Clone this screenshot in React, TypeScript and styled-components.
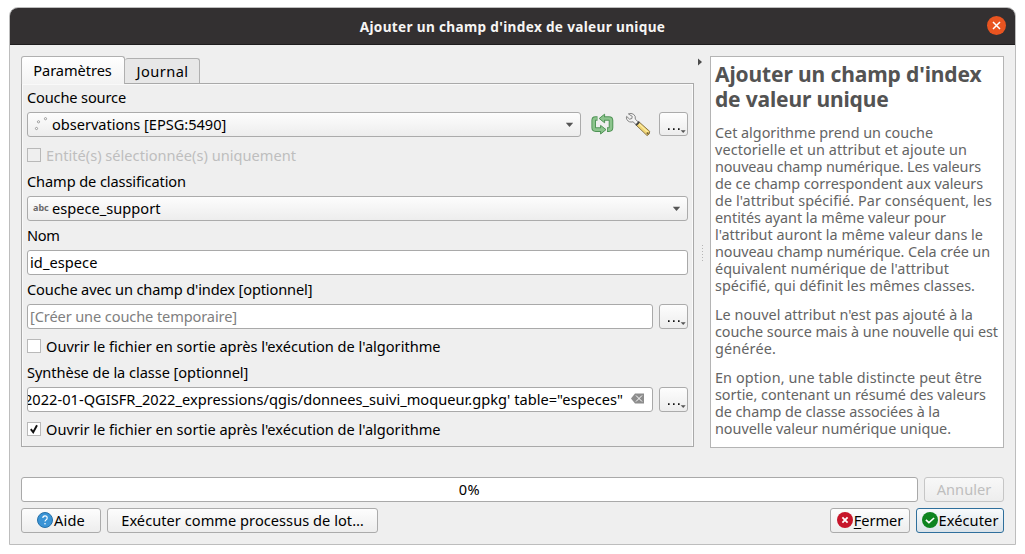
import React, { useLayoutEffect, useRef, useState } from "react";
import styled, { createGlobalStyle, css } from "styled-components";

const Global = createGlobalStyle`
  * { box-sizing: border-box; }
  body { margin: 0; background: #fff; overflow: hidden; }
  #root { font-family: "Noto Sans", "Open Sans", sans-serif; font-size: 14.6px; color: #000; }
  h1, p { margin: 0; }
`;

const TextRun = styled.span`
  display: inline-block;
  white-space: pre;
  flex: none;
`;

/* Controls whose caption sits one pixel above the middle. */
const raisedText = css`
  ${TextRun} {
    margin-bottom: 2px;
  }
`;

/* Tracks a run of text so that it takes up the given width. */
function Fit({ w, children }: { w: number; children: React.ReactNode }) {
  const ref = useRef<HTMLSpanElement>(null);
  const [spacing, setSpacing] = useState(0);
  useLayoutEffect(() => {
    const el = ref.current;
    if (!el) return;
    el.style.letterSpacing = "0px";
    const natural = el.getBoundingClientRect().width;
    const count = (el.textContent || "").length;
    const next = (w - natural) / count;
    el.style.letterSpacing = `${next}px`;
    setSpacing(next);
  }, [w]);
  return (
    <TextRun ref={ref} style={{ letterSpacing: `${spacing}px` }}>
      {children}
    </TextRun>
  );
}

const Page = styled.div`
  width: 1025px;
  height: 554px;
  padding: 7px 0 0 9px;
`;

const Dialog = styled.div`
  width: 1007px;
  height: 538px;
  border: 1px solid #bdbdbd;
  border-radius: 9px 9px 0 0;
  background: #efefef;
  overflow: hidden;
  display: flex;
  flex-direction: column;
`;

const TitleBar = styled.header`
  height: 37px;
  flex: none;
  background: #333031;
  border-bottom: 1px solid #1f1d1e;
  color: #f6f5f4;
  font-weight: 700;
  font-size: 13.6px;
  display: grid;
  grid-template-columns: 36px 1fr 36px;
  align-items: center;
  justify-items: center;
`;

const CloseButton = styled.button`
  width: 19px;
  height: 19px;
  margin: 0 1px 1px 0;
  border: 0;
  padding: 0;
  border-radius: 50%;
  background: #e95420;
  display: flex;
  align-items: center;
  justify-content: center;
`;

const Main = styled.div`
  display: flex;
  height: 392px;
  margin: 11px 11px 0;
`;

const Left = styled.section`
  width: 673px;
  display: flex;
  flex-direction: column;
`;

const Tabs = styled.div`
  display: flex;
  align-items: flex-end;
  height: 27px;
`;

const Tab = styled.div<{ $active?: boolean }>`
  display: flex;
  justify-content: center;
  align-items: center;
  border: 1px solid #b0b0b0;
  border-bottom: 0;
  border-radius: 3px 3px 0 0;
  ${(p) =>
    p.$active
      ? css`
          width: 104px;
          height: 28px;
          margin-bottom: -1px;
          padding-bottom: 2px;
          padding-right: 1px;
          background: linear-gradient(#ffffff, #f3f3f3);
          z-index: 1;
        `
      : css`
          width: 75px;
          height: 25px;
          background: #e7e7e7;
          border-left: 0;
          padding-left: 1px;
        `}
`;

const Pane = styled.div`
  height: 364px;
  border: 1px solid #a9a9a9;
  box-shadow: inset -1px 0 #fafafa, inset 0 1px #f9f9f9, inset 1px 0 #f9f9f9;
  padding: 0 5px;
`;

const Label = styled.div<{ $h: number }>`
  height: ${(p) => p.$h}px;
  display: flex;
  align-items: center;
  ${raisedText}
`;

const Row = styled.div`
  display: flex;
  height: 25px;
  align-items: flex-start;
`;

const raised = css`
  border: 1px solid #ababab;
  border-radius: 3px;
  background: linear-gradient(#fdfdfd, #ededed);
`;

const Combo = styled.div`
  ${raised}
  ${raisedText}
  height: 25px;
  flex: 1;
  display: flex;
  align-items: center;
  padding: 0 6px 0 4px;
`;

const ComboIcon = styled.span`
  width: 20px;
  height: 23px;
  flex: none;
  display: flex;
`;

const Spacer = styled.span`
  flex: 1;
`;

const ToolGap = styled.span`
  flex: none;
  width: 2px;
`;

const TypeBadge = styled.span`
  font-size: 9px;
  font-weight: 700;
  color: #6a6a6a;
  line-height: 22px;
  padding-left: 1px;
`;

const Input = styled.div<{ $end?: boolean }>`
  ${raisedText}
  height: 25px;
  flex: 1;
  min-width: 0;
  border: 1px solid #a9a9a9;
  border-radius: 3px;
  background: #fff;
  overflow: hidden;
  display: flex;
  align-items: center;
  padding-left: ${(p) => (p.$end ? 0 : 2)}px;
  padding-right: ${(p) => (p.$end ? 8 : 2)}px;
  justify-content: ${(p) => (p.$end ? "flex-end" : "flex-start")};
`;

const Placeholder = styled.span`
  color: #808080;
  display: flex;
`;

const ClearIcon = styled.svg`
  flex: none;
  margin-left: 8px;
  margin-bottom: 2px;
`;

const MoreButton = styled.button<{ $h?: number }>`
  ${raised}
  width: 29px;
  height: ${(p) => p.$h ?? 25}px;
  margin-left: 6px;
  padding: 0;
  flex: none;
  display: flex;
`;

const ToolIcon = styled.svg<{ $ml: number }>`
  flex: none;
  margin-left: ${(p) => p.$ml}px;
`;

const Check = styled.div<{ $h: number; $pt?: number; $disabled?: boolean }>`
  height: ${(p) => p.$h}px;
  padding-top: ${(p) => p.$pt ?? 0}px;
  display: flex;
  align-items: center;
  gap: 5px;
  color: ${(p) => (p.$disabled ? "#bebebe" : "#000")};
`;

const Box = styled.span<{ $disabled?: boolean }>`
  width: 14px;
  height: 14px;
  border: 1px solid #b9b9b9;
  background: ${(p) => (p.$disabled ? "#efefef" : "#fff")};
  display: flex;
`;

const Splitter = styled.div`
  width: 16px;
  display: flex;
  flex-direction: column;
`;

const Help = styled.aside`
  width: 294px;
  height: 392px;
  border: 1px solid #b4b4b4;
  background: #fff;
  padding: 5px 0 0 4px;
  color: #646464;
`;

const HelpTitle = styled.h1`
  font-size: 21px;
  line-height: 25px;
  font-weight: 700;
  color: #535353;
  display: flex;
  flex-direction: column;
  align-items: flex-start;
  margin-bottom: 12px;
`;

const HelpText = styled.p`
  font-size: 14.4px;
  line-height: 17px;
  display: flex;
  flex-direction: column;
  align-items: flex-start;
  margin-bottom: 12px;
`;

const ProgressRow = styled.div`
  display: flex;
  justify-content: space-between;
  margin: 29px 11px 0;
`;

const Progress = styled.div`
  ${raisedText}
  width: 897px;
  height: 25px;
  border: 1px solid #a9a9a9;
  border-radius: 3px;
  background: #fff;
  display: flex;
  align-items: center;
  justify-content: center;
`;

const Button = styled.button<{ $w: number; $kind?: "default" | "disabled" }>`
  ${raised}
  width: ${(p) => p.$w}px;
  height: 25px;
  padding: 0 0 2px;
  font: inherit;
  color: #000;
  display: flex;
  align-items: center;
  justify-content: center;
  ${(p) =>
    p.$kind === "disabled" &&
    css`
      color: #bebebe;
      border-color: #c6c6c6;
      background: linear-gradient(#f8f8f8, #ededed);
    `}
  ${(p) =>
    p.$kind === "default" &&
    css`
      border-color: #2f6f9c;
      background: linear-gradient(#f7fafc, #dbe3e9);
    `}
`;

const Footer = styled.footer`
  display: flex;
  gap: 6px;
  margin: 6px 11px 0;
`;

const Mnemonic = styled.span`
  text-decoration: underline;
  text-decoration-thickness: 1px;
  text-underline-offset: 2px;
`;

const Arrow = () => (
  <svg width="9" height="6" viewBox="0 0 9 6">
    <path d="M0.8 0.7h7.4L4.5 5z" fill="#555" />
  </svg>
);

const More = ({ h }: { h?: number }) => (
  <MoreButton $h={h}>
    <svg width="27" height="22" viewBox="0 0 27 22">
      <path d="M8 15.2h1.6v1.8H8zM13 15.2h1.6v1.8H13zM18 15.2h1.6v1.8H18z" fill="#111" />
      <path d="M20.7 17.2h5l-2.5 2.9z" fill="#555" />
    </svg>
  </MoreButton>
);

const PointsIcon = () => (
  <svg width="20" height="23" viewBox="0 0 20 23" fill="#fff" stroke="#888" strokeWidth="0.8">
    <circle cx="4.5" cy="15.5" r="1.1" />
    <circle cx="6.5" cy="8.8" r="1.1" />
    <circle cx="13.5" cy="5.7" r="1.1" />
  </svg>
);

const IterateIcon = () => (
  <ToolIcon $ml={10} width="24" height="24" viewBox="0 0 24 24">
    <g fill="none" strokeLinejoin="round" stroke="#4f9355" strokeWidth="4.6">
      <path d="M6.5 6.5H4.3Q2.7 6.5 2.7 8.5V15.5Q2.7 17.6 4.7 17.6H10" />
      <path d="M13 6.5H18Q20 6.5 20 8.5V15.5Q20 17.6 18 17.6H16" />
    </g>
    <path d="M13.6 2.2V10.8L8.2 6.5zM9.6 13.4V22L15 17.6z" fill="#8cc48d" stroke="#4f9355" strokeLinejoin="round" />
    <g fill="none" stroke="#8cc48d" strokeWidth="2.7" strokeLinejoin="round">
      <path d="M5.9 6.5H4.3Q2.7 6.5 2.7 8.5V15.5Q2.7 17.6 4.7 17.6H11" />
      <path d="M12.4 6.5H18Q20 6.5 20 8.5V15.5Q20 17.6 18 17.6H16.7" />
    </g>
  </ToolIcon>
);

const WrenchIcon = () => (
  <ToolIcon $ml={10} width="26" height="26" viewBox="0 0 26 26">
    <path d="M11.6 13.6l3-3.2L24.7 19.4q.4 2.8-2.6 4.2z" fill="#f2d675" stroke="#7d6a3a" strokeWidth="0.9" />
    <path d="M14.2 12.2l8.6 8" stroke="#fff0a8" strokeWidth="1.1" />
    <path
      d="M3.4 1.9Q6 .8 8.4 2.2Q11 4 10.3 7.2L13.6 10.3L11.4 12.9L8 9.8Q3.8 10.8 2 7.7Q1 5.8 1.6 4.4L4.6 7.2L6.9 6.5L7.2 4.3Z"
      fill="#f4f4f4"
      stroke="#777"
      strokeWidth="0.9"
      strokeLinejoin="round"
    />
    <path d="M10.9 13.4l3.4-3.7" stroke="#444" strokeWidth="1.7" />
    <circle cx="22.6" cy="21.3" r="1.1" fill="#715e32" />
  </ToolIcon>
);

const StatusIcon = styled.svg`
  flex: none;
  margin-right: 1px;
`;

const HELP_TITLE: [string, number][] = [
  ["Ajouter un champ d'index", 266.5],
  ["de valeur unique", 173.5],
];

const HELP_PARAGRAPHS: [string, number][][] = [
  [
    ["Cet algorithme prend un couche", 218],
    ["vectorielle et un attribut et ajoute un", 252],
    ["nouveau champ numérique. Les valeurs", 266],
    ["de ce champ correspondent aux valeurs", 268],
    ["de l'attribut spécifié. Par conséquent, les", 277],
    ["entités ayant la même valeur pour", 231],
    ["l'attribut auront la même valeur dans le", 268],
    ["nouveau champ numérique. Cela crée un", 275],
    ["équivalent numérique de l'attribut", 234],
    ["spécifié, qui définit les mêmes classes.", 260],
  ],
  [
    ["Le nouvel attribut n'est pas ajouté à la", 258],
    ["couche source mais à une nouvelle qui est", 283],
    ["générée.", 61],
  ],
  [
    ["En option, une table distincte peut être", 267],
    ["sortie, contenant un résumé des valeurs", 271],
    ["de champ de classe associées à la", 225],
    ["nouvelle valeur numérique unique.", 236],
  ],
];

const OPEN_OUTPUT = "Ouvrir le fichier en sortie après l'exécution de l'algorithme";

export default function App() {
  return (
    <Page>
      <Global />
      <Dialog>
        <TitleBar>
          <span />
          <Fit w={305.5}>Ajouter un champ d'index de valeur unique</Fit>
          <CloseButton>
            <svg width="9" height="9" viewBox="0 0 9 9">
              <path d="M1 1l7 7M8 1L1 8" stroke="#fff" strokeWidth="1.5" />
            </svg>
          </CloseButton>
        </TitleBar>
        <Main>
          <Left>
            <Tabs>
              <Tab $active>
                <Fit w={78.5}>Paramètres</Fit>
              </Tab>
              <Tab>
                <Fit w={52}>Journal</Fit>
              </Tab>
            </Tabs>
            <Pane>
              <Label $h={28}>
                <Fit w={99}>Couche source</Fit>
              </Label>
              <Row>
                <Combo>
                  <ComboIcon>
                    <PointsIcon />
                  </ComboIcon>
                  <Fit w={174.3}>observations [EPSG:5490]</Fit>
                  <Spacer />
                  <Arrow />
                </Combo>
                <IterateIcon />
                <WrenchIcon />
                <ToolGap />
                <More h={24} />
              </Row>
              <Check $h={31} $pt={5} $disabled>
                <Box $disabled />
                <Fit w={250}>Entité(s) sélectionnée(s) uniquement</Fit>
              </Check>
              <Label $h={28}>
                <Fit w={159}>Champ de classification</Fit>
              </Label>
              <Row>
                <Combo>
                  <ComboIcon>
                    <TypeBadge>abc</TypeBadge>
                  </ComboIcon>
                  <Fit w={108.5}>espece_support</Fit>
                  <Spacer />
                  <Arrow />
                </Combo>
              </Row>
              <Label $h={29}>
                <Fit w={32.5}>Nom</Fit>
              </Label>
              <Row>
                <Input>
                  <Fit w={67.5}>id_espece</Fit>
                </Input>
              </Row>
              <Label $h={29}>
                <Fit w={285.3}>Couche avec un champ d'index [optionnel]</Fit>
              </Label>
              <Row>
                <Input>
                  <Placeholder>
                    <Fit w={207}>[Créer une couche temporaire]</Fit>
                  </Placeholder>
                </Input>
                <More />
              </Row>
              <Check $h={30} $pt={4}>
                <Box />
                <Fit w={394.5}>{OPEN_OUTPUT}</Fit>
              </Check>
              <Label $h={28}>
                <Fit w={221.3}>Synthèse de la classe [optionnel]</Fit>
              </Label>
              <Row>
                <Input $end>
                  <Fit w={599}>2022-01-QGISFR_2022_expressions/qgis/donnees_suivi_moqueur.gpkg' table="especes"</Fit>
                  <ClearIcon width="13" height="11" viewBox="0 0 13 11">
                    <path d="M4 0.5H13V10.5H4L0 5.5z" fill="#8d8d8d" />
                    <path d="M5 2.5l6 6M11 2.5l-6 6" stroke="#fff" strokeWidth="1" />
                  </ClearIcon>
                </Input>
                <More />
              </Row>
              <Check $h={34}>
                <Box>
                  <svg width="12" height="12" viewBox="0 0 12 12">
                    <path d="M2.8 6.2L5.2 9.3L9 2.2" fill="none" stroke="#111" strokeWidth="1.9" />
                  </svg>
                </Box>
                <Fit w={394.5}>{OPEN_OUTPUT}</Fit>
              </Check>
            </Pane>
          </Left>
          <Splitter>
            <svg width="16" height="210" viewBox="0 0 16 210">
              <path d="M4 2.5v7L8 6z" fill="#4c4c4c" />
              <path d="M8.5 189v17" stroke="#b5b5b5" strokeDasharray="1 2" />
            </svg>
          </Splitter>
          <Help>
            <HelpTitle>
              {HELP_TITLE.map(([text, w]) => (
                <Fit key={text} w={w}>
                  {text}
                </Fit>
              ))}
            </HelpTitle>
            {HELP_PARAGRAPHS.map((lines) => (
              <HelpText key={lines[0][0]}>
                {lines.map(([text, w]) => (
                  <Fit key={text} w={w}>
                    {text}
                  </Fit>
                ))}
              </HelpText>
            ))}
          </Help>
        </Main>
        <ProgressRow>
          <Progress>
            <Fit w={21.5}>0%</Fit>
          </Progress>
          <Button $w={80} $kind="disabled">
            <Fit w={54.5}>Annuler</Fit>
          </Button>
        </ProgressRow>
        <Footer>
          <Button $w={80}>
            <StatusIcon width="16" height="16" viewBox="0 0 16 16">
              <circle cx="8" cy="8" r="7.5" fill="#3a94d6" stroke="#2670a8" />
              <path d="M5.8 6.1Q5.9 3.9 8 3.9Q10.2 3.9 10.2 5.9Q10.2 7.2 8.9 7.9Q8 8.4 8 9.6" fill="none" stroke="#fff" strokeWidth="1.1" />
              <circle cx="8" cy="11.8" r="0.8" fill="#fff" />
            </StatusIcon>
            <Fit w={31}>Aide</Fit>
          </Button>
          <Button $w={271}>
            <Fit w={242.5}>Exécuter comme processus de lot…</Fit>
          </Button>
          <Spacer />
          <Button $w={80}>
            <StatusIcon width="16" height="16" viewBox="0 0 16 16">
              <circle cx="8" cy="8" r="8" fill="#c7162b" />
              <path d="M5.4 5.4l5.2 5.2M10.6 5.4l-5.2 5.2" stroke="#fff" strokeWidth="1.8" />
            </StatusIcon>
            <Fit w={49.5}>
              <Mnemonic>F</Mnemonic>ermer
            </Fit>
          </Button>
          <Button $w={88} $kind="default">
            <StatusIcon width="16" height="16" viewBox="0 0 16 16">
              <circle cx="8" cy="8" r="8" fill="#0e8420" />
              <path d="M3.9 7.9l3 2.8l5.2-4.7" fill="none" stroke="#fff" strokeWidth="1.6" />
            </StatusIcon>
            <Fit w={60}>Exécuter</Fit>
          </Button>
        </Footer>
      </Dialog>
    </Page>
  );
}
